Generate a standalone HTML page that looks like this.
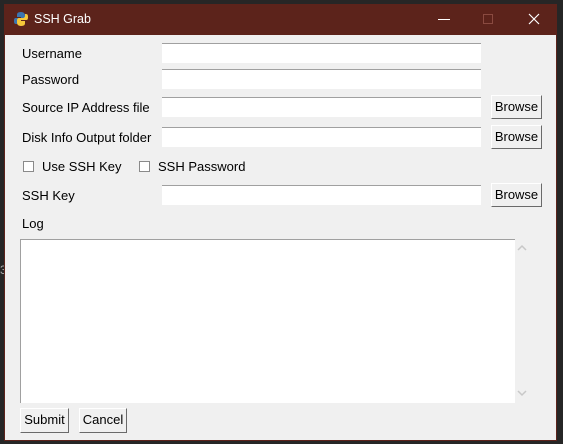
<!DOCTYPE html>
<html><head><style>
body{margin:0;width:563px;height:444px;background:#262626;position:relative;overflow:hidden;font-family:"Liberation Sans",sans-serif;font-size:12px;color:#000}
.win{position:absolute;left:4px;top:4px;width:553px;height:437px;background:#f0f0f0;border:1px solid #5c231b;box-sizing:border-box}
.title{position:absolute;left:4px;top:4px;width:553px;height:31px;background:#5c231b;color:#fff}
.a{position:absolute}
.e{position:absolute;background:#fff;border-top:1px solid #a0a0a0;box-sizing:border-box;height:20px}
.b{position:absolute;width:51px;height:24px;background:#f0f0f0;border:1px solid;border-color:#fff #6a6a6a #6a6a6a #fff;box-sizing:border-box;text-align:center;line-height:22px;font-size:13px}
.cb{position:absolute;width:11px;height:11px;background:#fff;border:1px solid #8a8a8a;box-sizing:border-box}
.l{position:absolute;font-size:13px}
</style></head><body>
<div class="a" style="left:0;top:263px;color:#aaa;font-size:12px">3</div>
<div class="win"></div>
<div class="title">
 <svg class="a" style="left:9px;top:7px" width="16" height="16" viewBox="0 0 16 16"><path d="M8 1C4 1 4 3 4 4v2h4v1H2.5C1 7 1 9 1 10s0 3 2 3h1v-2c0-1 1-2 2-2h4c1 0 2-1 2-2V4c0-1-1-3-4-3z" fill="#3a74b0"/><path d="M8 15c4 0 4-2 4-3v-2H8V9h5.5C15 9 15 7 15 6s0-3-2-3h-1v2c0 1-1 2-2 2H6c-1 0-2 1-2 2v3c0 1 1 3 4 3z" fill="#f5c73a"/></svg>
 <div class="a" style="left:30px;top:8px;font-size:12.5px">SSH Grab</div>
 <div class="a" style="left:434px;top:15px;width:12px;height:1px;background:#fff"></div>
 <div class="a" style="left:479px;top:10px;width:10px;height:10px;border:1px solid #8a4a40;box-sizing:border-box"></div>
 <svg class="a" style="left:524px;top:9px" width="12" height="12"><path d="M1 1L11 11M11 1L1 11" stroke="#fff" stroke-width="1.2"/></svg>
</div>
<div class="l" style="left:22px;top:46px">Username</div>
<div class="l" style="left:22px;top:72px">Password</div>
<div class="l" style="left:22px;top:100px">Source IP Address file</div>
<div class="l" style="left:22px;top:130px">Disk Info Output folder</div>
<div class="l" style="left:42px;top:159px">Use SSH Key</div>
<div class="l" style="left:158px;top:159px">SSH Password</div>
<div class="cb" style="left:23px;top:161px"></div>
<div class="cb" style="left:139px;top:161px"></div>
<div class="l" style="left:22px;top:188px">SSH Key</div>
<div class="l" style="left:22px;top:216px">Log</div>
<div class="e" style="left:162px;top:43px;width:319px"></div>
<div class="e" style="left:162px;top:69px;width:319px"></div>
<div class="e" style="left:162px;top:97px;width:319px"></div>
<div class="e" style="left:162px;top:127px;width:319px"></div>
<div class="e" style="left:162px;top:185px;width:319px"></div>
<div class="b" style="left:491px;top:95px">Browse</div>
<div class="b" style="left:491px;top:125px">Browse</div>
<div class="b" style="left:491px;top:183px">Browse</div>
<div class="a" style="left:20px;top:239px;width:495px;height:164px;background:#fff;border-top:1px solid #a0a0a0;border-left:1px solid #a0a0a0;box-sizing:border-box"></div>
<svg class="a" style="left:517px;top:244px" width="10" height="7"><path d="M1 6L5 2L9 6" stroke="#c8c8c8" fill="none" stroke-width="1.5"/></svg>
<svg class="a" style="left:517px;top:390px" width="10" height="7"><path d="M1 1L5 5L9 1" stroke="#c8c8c8" fill="none" stroke-width="1.5"/></svg>
<div class="b" style="left:20px;top:408px;width:49px;height:25px">Submit</div>
<div class="b" style="left:79px;top:408px;width:48px;height:25px">Cancel</div>
</body></html>
